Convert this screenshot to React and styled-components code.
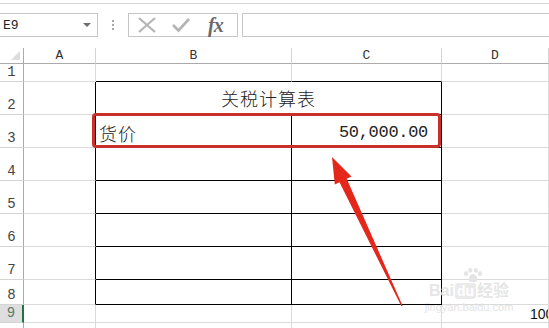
import React from 'react'
import styled, { createGlobalStyle } from 'styled-components'

const GlobalStyle = createGlobalStyle`
    html, body {
        margin: 0;
        padding: 0;
        background: #ffffff;
    }
    body {
        width: 549px;
        height: 328px;
        overflow: hidden;
        font-family: "Liberation Sans", "Noto Sans CJK SC", sans-serif;
    }
`

const COLS = ['', 'A', 'B', 'C', 'D']
const ROW_HEIGHTS = [16, 18, 33, 33, 33, 33, 33, 33, 25, 18, 10]
const GRID = '#dadada'
const INK = '#000000'

const App = () => {
    const rows = []
    for (let r = 1; r <= 10; r++) rows.push(r)

    const cellBorders = (r, c) => {
        // c: 1 = A, 2 = B, 3 = C, 4 = D
        let rb = GRID
        let bb = GRID
        if (c === 1 && r >= 2 && r <= 8) rb = INK
        if ((c === 2 || c === 3) && r >= 2 && r <= 8) rb = INK
        if ((c === 2 || c === 3) && r >= 1 && r <= 8) bb = INK
        return { rb, bb }
    }

    return (
        <>
            <GlobalStyle />
            <Page>
                <TopStrip />
                <FormulaBar>
                    <NameBox>
                        <span>E9</span>
                        <Caret />
                    </NameBox>
                    <Grip>
                        <i /><i /><i />
                    </Grip>
                    <FxButtons>
                        <FxIcon>
                            <svg width="20" height="20" viewBox="0 0 20 20">
                                <path d="M2 3 L18 17 M18 3 L2 17" stroke="#b4b4b4" strokeWidth="2.2" fill="none" />
                            </svg>
                        </FxIcon>
                        <FxIcon>
                            <svg width="20" height="20" viewBox="0 0 20 20">
                                <path d="M2 10 L7.5 15.5 L18 4" stroke="#b4b4b4" strokeWidth="2.6" fill="none" />
                            </svg>
                        </FxIcon>
                        <FxLabel>fx</FxLabel>
                    </FxButtons>
                    <FormulaInput />
                </FormulaBar>

                <SheetWrap>
                    <Sheet>
                        {COLS.map((label, c) => (
                            <ColHead key={'h' + c} $corner={c === 0}>
                                {c === 0 ? <CornerMark /> : label}
                            </ColHead>
                        ))}
                        {rows.map(r => (
                            <React.Fragment key={r}>
                                <RowHead $active={r === 9}>{r <= 9 ? r : ''}</RowHead>
                                {[1, 2, 3, 4].map(c => {
                                    if (r === 2 && c === 3) return null
                                    const { rb, bb } = cellBorders(r, c)
                                    if (r === 2 && c === 2) {
                                        return (
                                            <Cell key={c} $rb={INK} $bb={INK} $span={2} $align="center">
                                                <Title>关税计算表</Title>
                                            </Cell>
                                        )
                                    }
                                    if (r === 3 && c === 2) {
                                        return (
                                            <Cell key={c} $rb={rb} $bb={bb}>
                                                <Label>货价</Label>
                                            </Cell>
                                        )
                                    }
                                    if (r === 3 && c === 3) {
                                        return (
                                            <Cell key={c} $rb={rb} $bb={bb} $align="flex-end">
                                                <Amount>50,000.00</Amount>
                                            </Cell>
                                        )
                                    }
                                    if (r === 9 && c === 4) {
                                        return (
                                            <Cell key={c} $rb={rb} $bb={bb}>
                                                <Zoom>100%</Zoom>
                                            </Cell>
                                        )
                                    }
                                    return <Cell key={c} $rb={rb} $bb={bb} />
                                })}
                            </React.Fragment>
                        ))}
                    </Sheet>

                    <Highlight />

                    <Arrow width="549" height="280" viewBox="0 48 549 280">
                        <polygon
                            points="332,157 351.5,176.5 346.7,178.8 402.6,305.7 401.4,306.3 339.5,182.2 334.8,184.5"
                            fill="#e4261b"
                        />
                    </Arrow>

                    <Watermark>
                        <Paw>
                            <svg width="22" height="14" viewBox="0 0 30 20">
                                <g fill="#e4e4e4">
                                    <ellipse cx="5" cy="8" rx="3" ry="3.8" />
                                    <ellipse cx="11" cy="3.5" rx="3" ry="3.4" />
                                    <ellipse cx="19" cy="3.5" rx="3" ry="3.4" />
                                    <ellipse cx="25" cy="8" rx="3" ry="3.8" />
                                    <path d="M15 9 C9.5 9 7.5 16 9.5 18.5 C11.5 20.3 18.5 20.3 20.5 18.5 C22.5 16 20.5 9 15 9 Z" />
                                </g>
                            </svg>
                        </Paw>
                        <MarkRow>
                            <MarkText>Bai</MarkText>
                            <MarkBox>du</MarkBox>
                            <MarkText>经验</MarkText>
                        </MarkRow>
                        <MarkUrl>jingyan.baidu.com</MarkUrl>
                    </Watermark>
                </SheetWrap>
            </Page>
        </>
    )
}

const Page = styled.div`
    width: 549px;
    height: 328px;
    display: flex;
    flex-direction: column;
    overflow: hidden;
    background: #ffffff;
`

const TopStrip = styled.div`
    height: 3px;
    border-bottom: 1px solid #d6d6d6;
    flex: none;
`

const FormulaBar = styled.div`
    flex: none;
    height: 24px;
    margin: 9px 0 11px 0;
    display: flex;
    align-items: stretch;
`

const NameBox = styled.div`
    box-sizing: border-box;
    width: 98px;
    border: 1px solid #c6c6c6;
    border-left: none;
    display: flex;
    align-items: center;
    justify-content: space-between;
    padding: 0 6px 0 3px;

    font-family: "Liberation Mono", monospace;
    font-size: 13px;
    color: #222;
`

const Caret = styled.div`
    width: 0;
    height: 0;
    border-left: 4px solid transparent;
    border-right: 4px solid transparent;
    border-top: 4px solid #6d6d6d;
    margin-top: -1px;
`

const Grip = styled.div`
    width: 30px;
    display: flex;
    flex-direction: column;
    align-items: center;
    justify-content: center;
    gap: 2px;

    i {
        display: block;
        width: 2px;
        height: 2px;
        background: #a8a8a8;
    }
`

const FxButtons = styled.div`
    box-sizing: border-box;
    width: 110px;
    border: 1px solid #c6c6c6;
    display: flex;
    align-items: center;
    padding: 0 0 0 8px;
    gap: 14px;
`

const FxIcon = styled.div`
    width: 20px;
    height: 20px;
    display: flex;
    align-items: center;
    justify-content: center;
`

const FxLabel = styled.div`
    font-family: "Liberation Serif", serif;
    font-style: italic;
    font-weight: bold;
    font-size: 20px;
    color: #6a6a6a;
    margin-left: 3px;
    letter-spacing: -1px;
`

const FormulaInput = styled.div`
    flex: 1;
    margin-left: 4px;
    border: 1px solid #c6c6c6;
    border-right: none;
`

const SheetWrap = styled.div`
    position: relative;
    flex: 1;
`

const Sheet = styled.div`
    display: grid;
    grid-template-columns: 24px 72px 196px 150px 107px;
    grid-template-rows: ${ROW_HEIGHTS.map(h => h + 'px').join(' ')};
`

const ColHead = styled.div`
    box-sizing: border-box;
    border-bottom: 1px solid #ababab;
    border-right: 1px solid ${props => props.$corner ? '#ababab' : '#d4d4d4'};
    display: flex;
    align-items: center;
    justify-content: center;
    position: relative;

    font-family: "Liberation Mono", monospace;
    font-size: 13px;
    color: #333;
`

const CornerMark = styled.div`
    position: absolute;
    right: 3px;
    bottom: 3px;
    width: 0;
    height: 0;
    border-left: 9px solid transparent;
    border-bottom: 9px solid #dcdcdc;
`

const RowHead = styled.div`
    box-sizing: border-box;
    border-bottom: 1px solid #d4d4d4;
    border-right: ${props => props.$active ? '2px solid #217346' : '1px solid #ababab'};
    background: ${props => props.$active ? '#dedede' : '#ffffff'};
    display: flex;
    align-items: flex-end;
    justify-content: center;
    padding-bottom: 1px;

    font-family: "Liberation Mono", monospace;
    font-size: 14px;
    line-height: 16px;
    color: ${props => props.$active ? '#5c7a66' : '#444'};
`

const Cell = styled.div`
    box-sizing: border-box;
    grid-column: span ${props => props.$span || 1};
    border-right: 1px solid ${props => props.$rb};
    border-bottom: 1px solid ${props => props.$bb};
    display: flex;
    align-items: flex-end;
    justify-content: ${props => props.$align || 'flex-start'};
    overflow: hidden;
    white-space: nowrap;
`

const Title = styled.div`
    font-family: "Noto Sans CJK SC", sans-serif;
    font-weight: 300;
    font-size: 18px;
    line-height: 18px;
    color: #222;
    padding-bottom: 7px;
    letter-spacing: 1px;
`

const Label = styled.div`
    font-family: "Noto Sans CJK SC", sans-serif;
    font-weight: 300;
    font-size: 18px;
    line-height: 18px;
    color: #222;
    padding: 0 0 5px 3px;
    letter-spacing: 1px;
`

const Amount = styled.div`
    font-family: "Liberation Mono", monospace;
    font-size: 17px;
    line-height: 17px;
    letter-spacing: -0.3px;
    color: #222;
    padding: 0 13px 6px 0;
`

const Zoom = styled.div`
    font-family: "Liberation Sans", sans-serif;
    font-size: 14px;
    line-height: 14px;
    color: #111;
    padding: 0 0 1px 88px;
`

const Highlight = styled.div`
    position: absolute;
    left: 92px;
    top: 65px;
    width: 349px;
    height: 35px;
    box-sizing: border-box;
    border: 3px solid #c9302c;
    border-radius: 4px;
    pointer-events: none;
`

const Arrow = styled.svg`
    position: absolute;
    left: 0;
    top: 0;
    pointer-events: none;
`

const Watermark = styled.div`
    position: absolute;
    left: 421px;
    top: 220px;
    width: 96px;
    display: flex;
    flex-direction: column;
    align-items: center;
    pointer-events: none;
`

const Paw = styled.div`
    height: 14px;
    margin-left: 8px;
`

const MarkRow = styled.div`
    display: flex;
    align-items: center;
    gap: 1px;
    height: 18px;
`

const MarkText = styled.span`
    font-family: "Liberation Sans", "Noto Sans CJK SC", sans-serif;
    font-weight: bold;
    font-size: 16px;
    line-height: 18px;
    color: #e6e6e6;
`

const MarkBox = styled.span`
    font-family: "Liberation Sans", sans-serif;
    font-weight: bold;
    font-size: 14px;
    line-height: 16px;
    color: #ffffff;
    background: #eaeaea;
    border-radius: 3px;
    padding: 0 2px;
`

const MarkUrl = styled.div`
    font-family: "Liberation Sans", sans-serif;
    font-size: 11px;
    line-height: 12px;
    color: #e4e4e4;
    margin-top: 1px;
`

export default App
